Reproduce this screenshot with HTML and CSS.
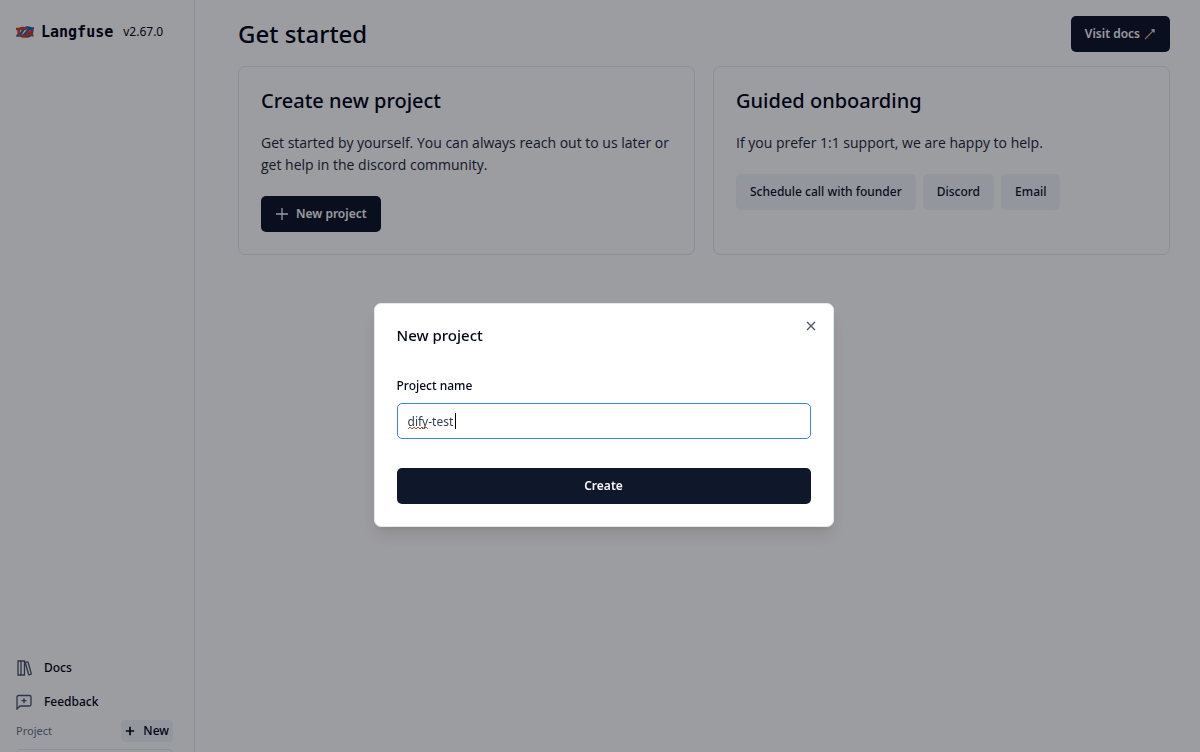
FILE: index.html
```html
<!DOCTYPE html>
<html lang="en">
<head>
<meta charset="UTF-8">
<meta name="viewport" content="width=device-width, initial-scale=1">
<title>Get started | Langfuse</title>
<link rel="stylesheet" href="styles.css">
</head>
<body>
<div class="app">
  <aside class="sidebar">
    <div class="brand">
      <svg class="logo" viewBox="0 0 36 24" stroke-width="5" aria-hidden="true">
        <path d="M36 5h-5c-5 0-7 3-10 7s-5 8-9 8" stroke="#2f5fa8"/>
        <path d="M1 18c4 2 7 1 9-3 3-6 6-12 12-12 7 0 10 4 10 9s-4 9-10 9c-3 0-5-1-7-3" stroke="#2f5fa8"/>
        <path d="M0 6h5c3 0 5-2 9-2 3 0 5 1 7 3" stroke="#c8442f"/>
        <path d="M15 4C8 4 5 8 5 12s3 9 10 9c6 0 8-5 12-8s5-3 8-3" stroke="#c8442f"/>
        <path d="M20 12c5 0 8 7 15 7" stroke="#c8442f"/>
      </svg>
      <span class="brand-name">Langfuse</span>
      <a class="version" href="#">v2.67.0</a>
    </div>
    <nav class="side-links">
      <a class="side-link" href="#">
        <svg viewBox="0 0 16 16" aria-hidden="true"><path d="M2 1h3v14H2zM5 1h3.500v14H5zM9.500 3.500q-.2-1 .7-1.300l.8-.2q.9-.2 1.200.7l3 10.600q.2.900-.7 1.200l-.8.200q-.9.200-1.200-.7z"/></svg>
        Docs
      </a>
      <a class="side-link" href="#">
        <svg viewBox="0 0 16 16" aria-hidden="true"><path d="M1 15V3a1.500 1.500 0 0 1 1.500-1.500h11A1.500 1.500 0 0 1 15 3v7.500a1.500 1.500 0 0 1-1.500 1.500H4zM8 4.200v5M5.500 6.700h5"/></svg>
        Feedback
      </a>
    </nav>
    <div class="project-row">
      <label for="project">Project</label>
      <button type="button" class="new-btn">
        <svg viewBox="0 0 12 12" aria-hidden="true"><path d="M6 1v10M1 6h10"/></svg>
        New
      </button>
    </div>
    <select id="project" class="project-select"></select>
  </aside>
  <main class="main">
    <header class="page-header">
      <h1>Get started</h1>
      <a class="btn btn-dark" href="#">Visit docs
        <svg class="wand" viewBox="0 0 12 12" aria-hidden="true"><path d="M1 11l9-9"/><path class="tip" d="M7.500 2h2.500v2.500"/></svg>
      </a>
    </header>
    <div class="cards">
      <section class="card">
        <h2>Create new project</h2>
        <p>Get started by yourself. You can always reach out to us later or get help in the discord community.</p>
        <div class="actions">
          <button type="button" class="btn btn-dark">
            <svg class="plus" viewBox="0 0 14 14" aria-hidden="true"><path d="M7 1v12M1 7h12"/></svg>
            New project
          </button>
        </div>
      </section>
      <section class="card">
        <h2>Guided onboarding</h2>
        <p>If you prefer 1:1 support, we are happy to help.</p>
        <div class="actions">
          <a class="btn btn-light" href="#">Schedule call with founder</a>
          <a class="btn btn-light" href="#">Discord</a>
          <a class="btn btn-light" href="#">Email</a>
        </div>
      </section>
    </div>
  </main>
</div>

<div class="overlay">
  <div class="dialog" role="dialog" aria-modal="true" aria-labelledby="dialog-title">
    <div class="dialog-header">
      <h2 id="dialog-title">New project</h2>
      <button type="button" class="close" aria-label="Close">
        <svg viewBox="0 0 10 10" aria-hidden="true"><path d="M1 1l8 8M9 1l-8 8"/></svg>
      </button>
    </div>
    <form>
      <label for="name">Project name</label>
      <div class="field">
        <input id="name" type="text" value="dify-test" autocomplete="off">
        <svg class="squiggle" viewBox="0 0 22 4" aria-hidden="true"><path d="M0 3l2-2 2 2 2-2 2 2 2-2 2 2 2-2 2 2 2-2 2 2"/></svg>
        <span class="caret"></span>
      </div>
      <button type="submit" class="btn btn-dark">Create</button>
    </form>
  </div>
</div>
</body>
</html>
```

FILE: styles.css
```css
* { box-sizing: border-box; }
body { margin: 0; font-family: "Noto Sans", "Open Sans", sans-serif; font-size: 12px; line-height: 18px; color: #020817; background: #fff; }
h1, h2, p { margin: 0; }
h1, h2 { font-weight: 500; }
a { color: inherit; text-decoration: none; }
button, input, select { font: inherit; color: inherit; }
svg { flex: none; fill: none; stroke: currentColor; }

.app { display: flex; height: 100vh; overflow: hidden; }

.sidebar { display: flex; flex-direction: column; flex: none; width: 195px; padding: 22px 21px 0 16px; border-right: 1px solid #e2e8f0; }
.brand { display: flex; align-items: center; height: 20px; }
.logo { width: 18px; height: 12px; margin-right: 7px; }
.brand-name { font-family: "DejaVu Sans Mono", "Liberation Mono", monospace; font-size: 15px; font-weight: 600; }
.version { margin-left: 10px; font-size: 12px; }
.side-links { display: flex; flex-direction: column; gap: 16px; margin-top: auto; }
.side-link { display: flex; align-items: center; gap: 12px; font-weight: 500; }
.side-link svg { width: 16px; height: 16px; color: #475569; stroke-width: 1.3; }
.project-row { display: flex; align-items: center; justify-content: space-between; margin: 9px 0 7px; }
.project-row label { font-size: 11px; color: #64748b; }
.new-btn { display: flex; align-items: center; gap: 8px; height: 22px; padding: 0 4px; border: 0; border-radius: 4px; background: #f1f5f9; font-weight: 500; }
.new-btn svg { width: 10px; height: 10px; stroke-width: 2; }
.project-select { flex: none; height: 36px; margin-bottom: -33px; border: 1px solid #e2e8f0; border-radius: 5px; background: #fff; appearance: none; }

.main { flex: 1; min-width: 0; padding: 16px 30px 0 43px; }
.page-header { display: flex; align-items: center; justify-content: space-between; margin-bottom: 14px; }
.page-header h1 { font-size: 24px; line-height: 36px; }
.cards { display: grid; grid-template-columns: 1fr 1fr; gap: 18px; }
.card { padding: 22px; border: 1px solid #e2e8f0; border-radius: 7px; }
.card h2 { font-size: 20px; line-height: 24px; }
.card p { margin: 19px 0 20px; font-family: "Open Sans", "Noto Sans", sans-serif; font-size: 14px; line-height: 22px; color: #1e293b; }
.actions { display: flex; gap: 7px; }

.btn { display: inline-flex; align-items: center; justify-content: center; height: 36px; padding: 0 14px; border: 0; border-radius: 5px; font-size: 12px; font-weight: 600; white-space: nowrap; }
.btn-dark { background: #0f172a; color: #f8fafc; }
.btn-light { background: #f1f5f9; color: #0f172a; font-weight: 500; }
.wand { width: 12px; height: 12px; margin-left: 4px; color: #d9a47c; stroke-width: 1.3; }
.tip { stroke: #f8fafc; }
.plus { width: 14px; height: 14px; margin-right: 7px; stroke-width: 1.3; }

/* dialog */
.overlay { position: fixed; inset: 0; display: flex; align-items: center; justify-content: center; padding: 78px 0 0 7px; background: rgba(0, 2, 12, .39); }
.dialog { width: 100%; max-width: 460px; padding: 22px; border: 1px solid #e2e8f0; border-radius: 7px; background: #fff; box-shadow: 0 10px 15px -3px rgba(0, 0, 0, .1), 0 4px 6px -4px rgba(0, 0, 0, .1); }
.dialog-header { display: flex; justify-content: space-between; align-items: flex-start; margin-bottom: 33px; }
.dialog-header h2 { font-size: 15px; line-height: 18px; }
.close { display: flex; margin: -5px -5px 0 0; padding: 0; border: 0; background: none; color: #475569; }
.close svg { width: 10px; height: 10px; stroke-width: 1.3; }
form { display: flex; flex-direction: column; }
form label { margin-bottom: 8px; font-weight: 500; }
.field { position: relative; margin-bottom: 29px; }
.field input { display: block; width: 100%; height: 36px; padding: 0 10px; border: 1px solid #3b82f6; border-radius: 5px; outline: 0; background: #fff; color: #334155; }
.squiggle { position: absolute; left: 11px; top: 23px; width: 22px; height: 4px; color: #b4533c; }
.caret { position: absolute; left: 58px; top: 10px; width: 1px; height: 16px; background: #000; }
```
